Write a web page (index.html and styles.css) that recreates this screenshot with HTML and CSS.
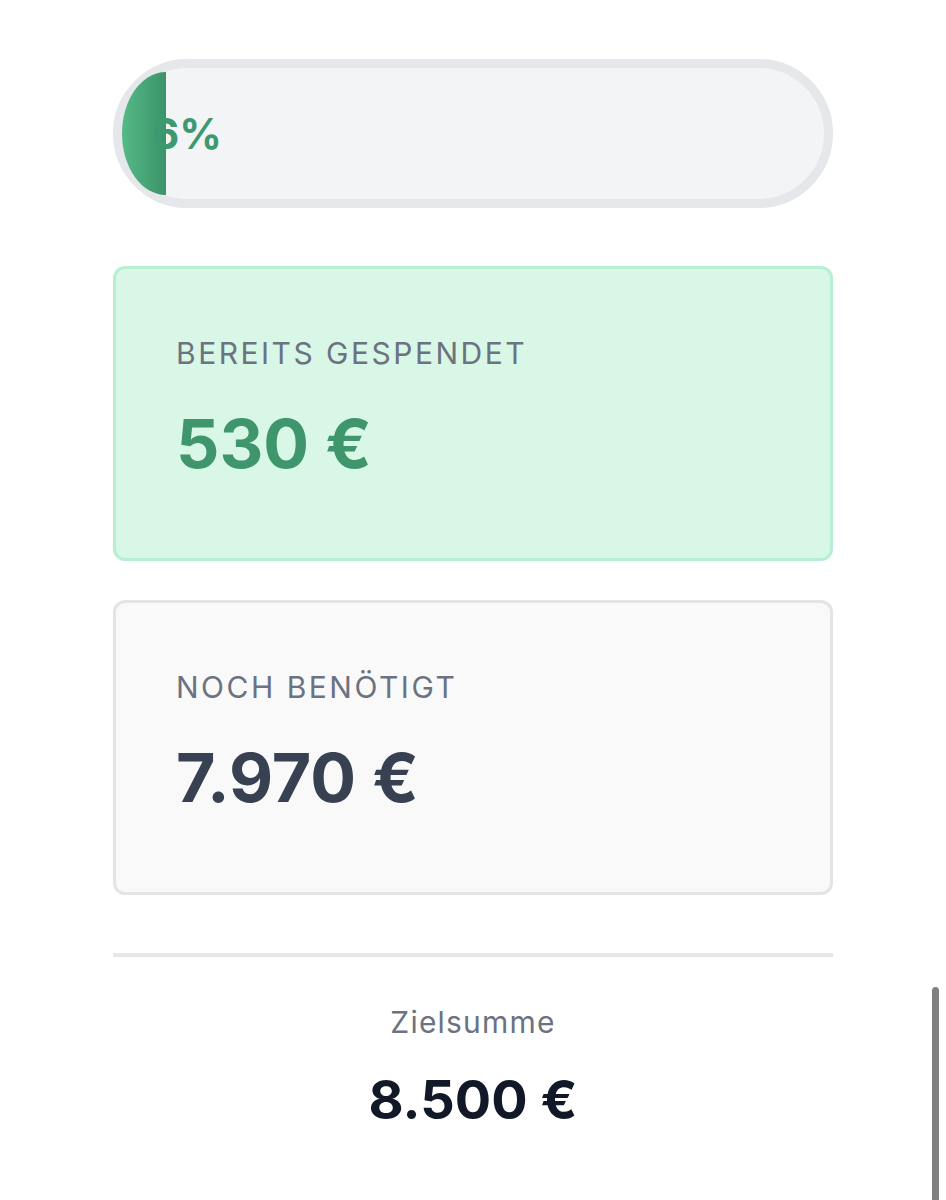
FILE: index.html
```html
<!DOCTYPE html>
<html lang="de">
<head>
    <meta charset="utf-8">
    <title>Spendenstand</title>
    <link rel="stylesheet" href="styles.css">
</head>

<body>
    <main class="page">
        <div class="progress">
            <div class="progress-fill" style="width: 6.235%"></div>
            <span class="progress-label">6%</span>
        </div>

        <section class="stat stat-raised">
            <p class="stat-label">Bereits gespendet</p>
            <p class="stat-value">530 €</p>
        </section>

        <section class="stat stat-missing">
            <p class="stat-label">Noch benötigt</p>
            <p class="stat-value">7.970 €</p>
        </section>

        <footer class="goal">
            <p class="goal-label">Zielsumme</p>
            <p class="goal-value">8.500 €</p>
        </footer>
    </main>
    <div class="scrollbar"></div>
</body>

</html>
```

FILE: styles.css
```css
html,
body {
    margin: 0;
    padding: 0;
    background: #fff;
}

body {
    font-family: Inter, "Noto Sans", "DejaVu Sans", sans-serif;
    color: #111827;
}

p {
    margin: 0;
}

.page {
    width: 720px;
    margin: 0 auto;
    padding-top: 59px;
}

/* progress bar */
.progress {
    position: relative;
    display: flex;
    box-sizing: border-box;
    height: 149px;
    padding: 4px 0;
    border: 9px solid #e5e7eb;
    border-radius: 999px;
    background-color: #f3f4f6;
}

.progress-fill {
    height: 100%;
    border-radius: 100% 0 0 100% / 50% 0 0 50%;
    background: linear-gradient(90deg, #55b987, #3b9369);
}

.progress-label {
    position: absolute;
    left: 30px;
    top: 50%;
    transform: translateY(-50%);
    font-size: 42px;
    font-weight: 700;
    line-height: 1;
    color: #3d9970;
}

/* stat cards */
.stat {
    border: 3px solid;
    border-radius: 12px;
    padding: 66px 60px 75px;
}

.stat-raised {
    margin-top: 58px;
    background-color: #d9f7e6;
    border-color: #b7f0d0;
}

.stat-missing {
    margin-top: 39px;
    background-color: #f9f9fa;
    border-color: #e4e4e7;
}

.stat-label {
    font-size: 30px;
    line-height: 36px;
    letter-spacing: 2.5px;
    text-transform: uppercase;
    color: #6b7280;
}

.stat-value {
    margin-top: 32px;
    font-size: 68px;
    line-height: 80px;
    font-weight: 700;
}

.stat-raised .stat-value {
    color: #3f956c;
}

.stat-missing .stat-value {
    color: #374151;
}

/* goal */
.goal {
    margin-top: 58px;
    padding-top: 47px;
    border-top: 4px solid #e5e7eb;
    text-align: center;
}

.goal-label {
    font-size: 30px;
    line-height: 36px;
    letter-spacing: 1.2px;
    color: #6b7280;
}

.goal-value {
    margin-top: 26px;
    font-size: 54px;
    line-height: 68px;
    font-weight: 700;
    color: #111827;
}

.scrollbar {
    position: fixed;
    right: 7px;
    top: 987px;
    bottom: 0;
    width: 7px;
    border-radius: 4px 4px 0 0;
    background-color: #808080;
}
```
